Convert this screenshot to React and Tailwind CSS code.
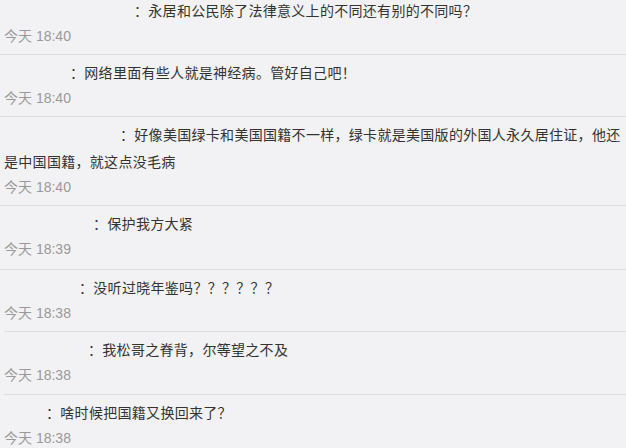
import React from 'react';

// 评论列表（用户名为空白占位）
const comments = [
    { id: 1, pad: 'w-[130px]', text: '：永居和公民除了法律意义上的不同还有别的不同吗？', time: '今天 18:40', pb: 'pb-[6px]', inset: false },
    { id: 2, pad: 'w-[66px]', text: '：网络里面有些人就是神经病。管好自己吧！', time: '今天 18:40', pb: 'pb-[6px]', inset: false },
    { id: 3, pad: 'w-[116px]', text: '：好像美国绿卡和美国国籍不一样，绿卡就是美国版的外国人永久居住证，他还是中国国籍，就这点没毛病', time: '今天 18:40', pb: 'pb-[6px]', inset: false },
    { id: 4, pad: 'w-[89px]', text: '：保护我方大紧', time: '今天 18:39', pb: 'pb-[8px]', inset: false },
    { id: 5, pad: 'w-[75px]', text: '：没听过晓年鉴吗？？？？？？', time: '今天 18:38', pb: 'pb-[6px]', inset: true },
    { id: 6, pad: 'w-[84px]', text: '：我松哥之脊背，尔等望之不及', time: '今天 18:38', pb: 'pb-[7px]', inset: true },
    { id: 7, pad: 'w-[42px]', text: '：啥时候把国籍又换回来了？', time: '今天 18:38', pb: 'pb-[6px]', inset: false },
];

const CommentRow = ({ c }) => (
    <div className={`pt-[5px] ${c.pb} border-b border-[#dcdcdc] ${c.inset ? 'ml-[4px]' : ''}`}>
        <p className={`text-[14px] leading-[27px] tracking-[0.3px] text-[#333] ${c.inset ? 'pl-0' : 'pl-[4px]'}`}>
            <span className={`inline-block ${c.pad}`}></span>
            {c.text}
        </p>
        <div className={`text-[14px] leading-[23px] text-[#999] ${c.inset ? 'pl-0' : 'pl-[4px]'}`}>{c.time}</div>
    </div>
);

export default function App() {
    return (
        <div
            className="w-[626px] h-[448px] overflow-hidden bg-[#f2f2f4]"
            style={{ fontFamily: '"Liberation Sans", "Noto Sans CJK SC", sans-serif' }}
        >
            <div className="-mt-[7px]">
                {comments.map(c => (
                    <CommentRow key={c.id} c={c} />
                ))}
            </div>
        </div>
    );
}
